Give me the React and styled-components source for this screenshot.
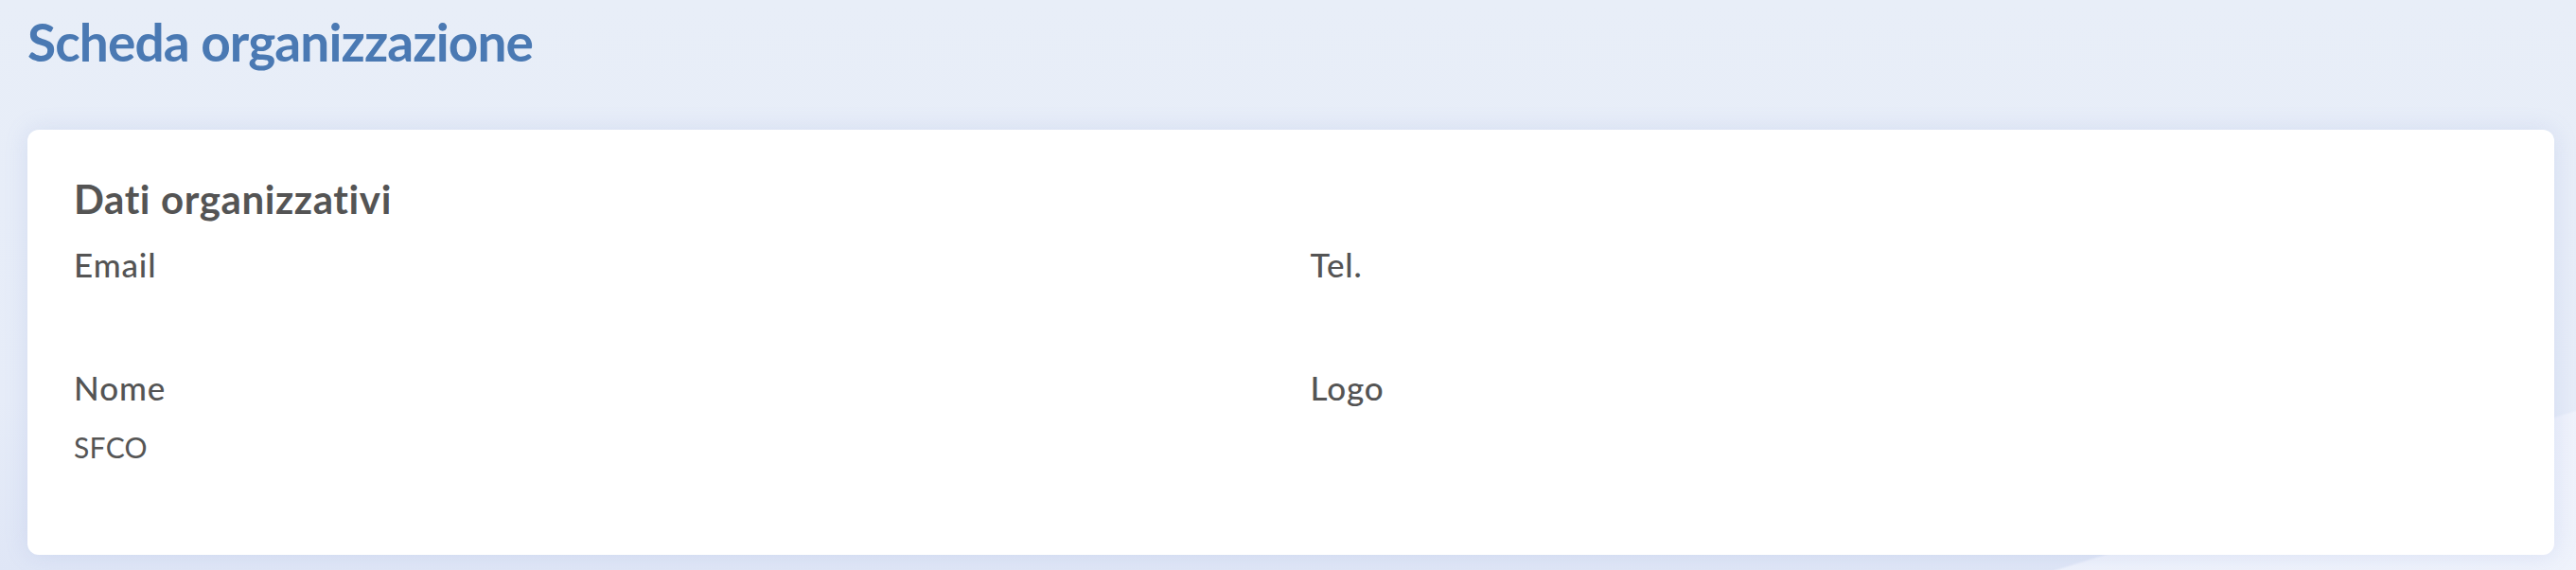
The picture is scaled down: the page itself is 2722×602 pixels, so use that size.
import React from "react";
import styled, { createGlobalStyle } from "styled-components";

const GlobalStyle = createGlobalStyle`
  html, body {
    margin: 0;
    padding: 0;
  }
  body {
    font-family: "Lato", "Noto Sans", sans-serif;
    background: #e7edf8;
  }
  * { box-sizing: border-box; }
`;

const Page = styled.div`
  min-height: 602px;
  padding: 11px 23px 19px 29px;
  background:
    linear-gradient(163deg, rgba(255,255,255,0) 88%, rgba(240,243,252,0.9) 88.2%),
    linear-gradient(180deg, #e8eef8 0%, #e6ecf8 70%, #dfe6f6 100%);
  display: flex;
  flex-direction: column;
`;

const Title = styled.h1`
  margin: 0;
  font-size: 55px;
  line-height: 1.2;
  letter-spacing: -0.9px;
  font-weight: 700;
  color: #4a79b3;
`;

const Card = styled.section`
  margin-top: 60px;
  background: #ffffff;
  border-radius: 12px;
  box-shadow: 0 0 24px rgba(120, 145, 210, 0.18);
  padding: 48px 48px 93px 49px;
`;

const SectionTitle = styled.h2`
  margin: 0 0 23px;
  font-size: 42px;
  line-height: 1.2;
  letter-spacing: 0.6px;
  font-weight: 700;
  color: #545454;
`;

const FieldGrid = styled.div`
  display: grid;
  grid-template-columns: 1fr 1fr;
  column-gap: 40px;
  row-gap: 25px;
`;

const Field = styled.div`
  display: flex;
  flex-direction: column;
`;

const Label = styled.div`
  font-size: 35px;
  line-height: 1.2;
  letter-spacing: 0.9px;
  font-weight: 500;
  color: #545454;
`;

const Value = styled.div`
  margin-top: 21px;
  font-size: 30px;
  line-height: 42px;
  min-height: 42px;
  letter-spacing: 0.3px;
  font-weight: 400;
  color: #555555;
`;

const fields = [
  { label: "Email", value: "" },
  { label: "Tel.", value: "" },
  { label: "Nome", value: "SFCO" },
  { label: "Logo", value: "" },
];

export default function App() {
  return (
    <>
      <GlobalStyle />
      <Page>
        <Title>Scheda organizzazione</Title>
        <Card>
          <SectionTitle>Dati organizzativi</SectionTitle>
          <FieldGrid>
            {fields.map((f) => (
              <Field key={f.label}>
                <Label>{f.label}</Label>
                <Value>{f.value}</Value>
              </Field>
            ))}
          </FieldGrid>
        </Card>
      </Page>
    </>
  );
}
